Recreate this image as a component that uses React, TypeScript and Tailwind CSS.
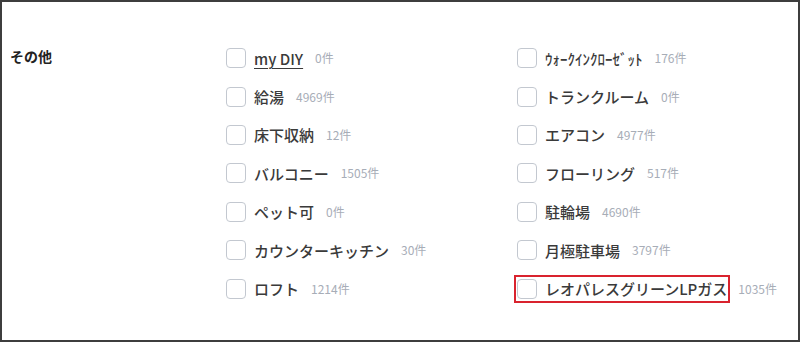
import React from "react";

type Item = { label: string; count: string; underline?: boolean; highlight?: boolean };

const col1: Item[] = [
  { label: "my DIY", count: "0件", underline: true },
  { label: "給湯", count: "4969件" },
  { label: "床下収納", count: "12件" },
  { label: "バルコニー", count: "1505件" },
  { label: "ペット可", count: "0件" },
  { label: "カウンターキッチン", count: "30件" },
  { label: "ロフト", count: "1214件" },
];

const col2: Item[] = [
  { label: "ｳｫｰｸｲﾝｸﾛｰｾﾞｯﾄ", count: "176件" },
  { label: "トランクルーム", count: "0件" },
  { label: "エアコン", count: "4977件" },
  { label: "フローリング", count: "517件" },
  { label: "駐輪場", count: "4690件" },
  { label: "月極駐車場", count: "3797件" },
  { label: "レオパレスグリーンLPガス", count: "1035件", highlight: true },
];

function Box() {
  return <span className="block w-[20px] h-[20px] shrink-0 rounded-[4px] border-[1.5px] border-[#c3c8d0] bg-white" />;
}

function Row({ item }: { item: Item }) {
  const inner = (
    <>
      <Box />
      <span
        className={
          "ml-[8px] text-[15px] leading-none font-medium text-[#3a3a3a] whitespace-nowrap " +
          (item.underline ? "underline underline-offset-[3px] decoration-[1px]" : "")
        }
      >
        {item.label}
      </span>
    </>
  );
  return (
    <div className="h-[38.4px] flex items-center">
      {item.highlight ? (
        <span className="flex items-center -ml-[3px] pl-[1px] pr-[1px] py-[2px] border-2 border-[#d9232e]">
          {inner}
        </span>
      ) : (
        inner
      )}
      <span className={"text-[12px] leading-none text-[#a7adb7] whitespace-nowrap " + (item.highlight ? "ml-[8px]" : "ml-[12px]")}>
        {item.count}
      </span>
    </div>
  );
}

export default function App() {
  return (
    <div
      className="w-[800px] h-[342px] border-2 border-[#3d3d3d] bg-white overflow-hidden"
      style={{ fontFamily: '"Noto Sans CJK JP", "Noto Sans", sans-serif' }}
    >
      <div className="flex pt-[37px] pl-[8px]">
        <div className="w-[216px] shrink-0 h-[38.4px] flex items-center -mt-[2px]">
          <span className="text-[14px] font-bold text-[#222]">その他</span>
        </div>
        <div className="grid grid-cols-[291px_260px]">
          <div className="flex flex-col">
            {col1.map((it) => (
              <Row key={it.label} item={it} />
            ))}
          </div>
          <div className="flex flex-col">
            {col2.map((it) => (
              <Row key={it.label} item={it} />
            ))}
          </div>
        </div>
      </div>
    </div>
  );
}
